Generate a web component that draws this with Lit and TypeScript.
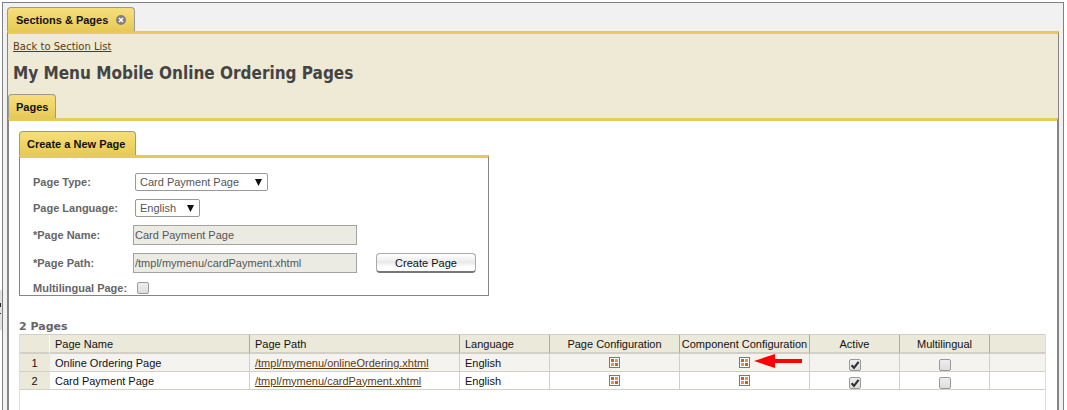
import { LitElement, html, css, svg } from "lit";
import { customElement, state } from "lit/decorators.js";

interface PageRow {
  name: string;
  path: string;
  language: string;
  active: boolean;
  multilingual: boolean;
  marked: boolean;
}

@customElement("app-root")
export class AppRoot extends LitElement {
  @state() private rows: PageRow[] = [
    { name: "Online Ordering Page", path: "/tmpl/mymenu/onlineOrdering.xhtml", language: "English", active: true, multilingual: false, marked: true },
    { name: "Card Payment Page", path: "/tmpl/mymenu/cardPayment.xhtml", language: "English", active: true, multilingual: false, marked: false },
  ];

  static styles = css`
    :host {
      display: flex;
      box-sizing: border-box;
      height: 100vh;
      overflow: hidden;
      padding: 2px 3px 0 2px;
      position: relative;
      background: #fff;
      font: 11px/16px "Liberation Sans", Arial, sans-serif;
      color: #111;
    }
    * { box-sizing: border-box; }
    .edge {
      position: absolute;
      left: 0;
      top: 290px;
      width: 2px;
      height: 40px;
      background: #e2e2e2;
    }
    .edge svg { display: block; }
    .frame {
      flex: 1;
      min-width: 0;
      display: flex;
      flex-direction: column;
      border: 1px solid #808080;
      border-bottom: 0;
      background: #f1f1f1;
      padding: 4px 4px 0;
    }
    .tab {
      display: flex;
      align-items: center;
      width: max-content;
      border: 1px solid #999;
      border-bottom: 0;
      border-radius: 4px 4px 0 0;
      background: linear-gradient(#f7de7c, #f0d566 50%, #e6ca58);
      padding: 0 7px;
      height: 24px;
      font-weight: bold;
      color: #111;
      margin: 0;
    }
    .tab.main { padding: 0 8px; gap: 8px; }
    .create .tab { padding-right: 10px; }
    .close {
      border: 0;
      padding: 0;
      background: none;
      width: 10px;
      height: 10px;
      display: block;
    }
    .close svg { display: block; }
    .body {
      flex: 1;
      display: flex;
      flex-direction: column;
      border: 1px solid #858585;
      border-top: 3px solid #e6ca58;
      border-bottom: 0;
      background: #eeead6;
    }
    .head { padding: 5px 5px 0; }
    .head a, td a { color: #5e3a10; text-decoration: underline; }
    .back { font: 10px/16px "DejaVu Sans", Verdana, sans-serif; display: block; width: max-content; }
    h1 {
      font: bold 17px/24px "DejaVu Sans Condensed", Tahoma, "Noto Sans", sans-serif;
      color: #444;
      margin: 6px 0 9px;
    }
    .content {
      flex: 1;
      border: 1px solid #858585;
      border-top: 3px solid #e6ca58;
      border-bottom: 0;
      background: #fff;
      padding: 10px 10px 0;
      display: flex;
      flex-direction: column;
    }
    .create { width: 470px; max-width: 100%; }
    .form {
      border: 1px solid #858585;
      border-top: 3px solid #e6ca58;
      padding: 15px 12px 0 13px;
      display: grid;
      grid-template-columns: 100px 224px 100px;
      column-gap: 0;
      row-gap: 8px;
      align-items: center;
    }
    .form label { font-weight: bold; line-height: 14px; color: #666; white-space: nowrap; }
    .form button { grid-column: 3; margin-left: 19px; }
    .form .first { grid-column: 1; }
    select, .text, .submit { font: 11px/16px "Liberation Sans", Arial, sans-serif; margin: 0; }
    select {
      appearance: none;
      justify-self: start;
      margin-left: 2px;
      height: 18px;
      border: 1px solid #999;
      border-radius: 2px;
      color: #555;
      padding: 0 4px;
      background: #fff url("data:image/svg+xml,%3Csvg xmlns='http://www.w3.org/2000/svg' width='7' height='7'%3E%3Cpath d='M0 0h7L3.5 7z' fill='%23111'/%3E%3C/svg%3E") no-repeat right 5px center;
    }
    .type { width: 133px; }
    .lang { width: 65px; }
    .text {
      height: 20px;
      width: 100%;
      border: 1px solid #a3a3a0;
      background: #ebebe4;
      color: #555;
      padding: 0 1px;
    }
    .submit {
      width: 100px;
      height: 20px;
      border: 1px solid #aaa;
      border-bottom: 2px solid #777;
      border-radius: 4px;
      background: linear-gradient(#fff, #e9e9e9 50%, #fff 75%);
      color: #111;
      padding: 0;
    }
    .tick {
      appearance: none;
      display: block;
      width: 12px;
      height: 12px;
      margin: 0 auto;
      border: 1px solid #999;
      border-radius: 2px;
      background: linear-gradient(#eee, #ddd);
    }
    .tick:checked {
      background: url("data:image/svg+xml,%3Csvg xmlns='http://www.w3.org/2000/svg' width='10' height='10'%3E%3Cpath d='M1.6 5.2L4 7.8L8.6 1.8' stroke='%23333' stroke-width='2.2' fill='none'/%3E%3C/svg%3E") center no-repeat, linear-gradient(#eee, #ddd);
    }
    .form .tick { margin: 0 4px; }
    h2 {
      font: bold 11px/12px "DejaVu Sans", Verdana, sans-serif;
      color: #666;
      margin: 25px 0 1px;
    }
    .grid {
      flex: 1;
      border: 1px solid #ddd;
      border-top-color: #d2cfc6;
      border-bottom: 0;
      margin-right: 1px;
    }
    table { width: 100%; table-layout: fixed; border-collapse: separate; border-spacing: 0; }
    th, td {
      height: 18px;
      padding: 0 4px 0 5px;
      text-align: left;
      font-weight: normal;
      white-space: nowrap;
      line-height: 16px;
      border-right: 1px solid #d2cfc6;
      border-bottom: 1px solid #d2cfc6;
    }
    thead th {
      background: #ebe9da;
      height: 19px;
      border-bottom-width: 2px;
      border-right-color: #aaa;
    }
    thead th:first-child { border-right-color: #fff; }
    tbody th { background: #ebe9da; text-align: center; border-right-color: #ebe9da; padding: 0; }
    th:last-child, td:last-child { border-right: 0; }
    tbody tr:nth-child(odd) td { background: #f5f3f0; }
    th.mid, td.mid { text-align: center; padding: 0; }
    td.low { vertical-align: bottom; }
    .c-num { width: 30px; }
    .c-name { width: 200px; }
    .c-path { width: 210px; }
    .c-small { width: 90px; }
    .c-conf { width: 130px; }
    .icon { position: relative; display: block; width: 11px; height: 11px; margin: 0 auto; }
    .icon > a, .icon svg { display: block; }
    .pointer { position: absolute; left: 15px; top: -3px; }
  `;

  private gridIcon() {
    return svg`<svg width="11" height="11" viewBox="0 0 11 11" shape-rendering="crispEdges">
      <rect x=".5" y=".5" width="10" height="10" fill="#fff" stroke="#c60"/>
      <path d="M2 2h3v3h-3zM6 6h3v3h-3z" fill="#c60"/>
      <path d="M6 2h3v3h-3zM2 6h3v3h-3z" fill="#dc9650"/>
    </svg>`;
  }

  private pointer() {
    return html`<svg class="pointer" width="48" height="14" viewBox="0 0 48 14">
      <path d="M0 7L21 0V5H48V9H21V14Z" fill="#f00"/>
    </svg>`;
  }

  render() {
    return html`
      <div class="edge">
        <svg width="2" height="40" viewBox="0 0 2 40"><path d="M0 13h1v4h-1zM0 23h1v1h-1z" fill="#222"/></svg>
      </div>
      <div class="frame">
        <div class="tab main">
          Sections &amp; Pages
          <button class="close" aria-label="Close">
            <svg width="10" height="10" viewBox="0 0 10 10"><circle cx="5" cy="5" r="5" fill="#808080"/><path d="M3 3l4 4M7 3l-4 4" stroke="#fff" stroke-width="1.6"/></svg>
          </button>
        </div>
        <div class="body">
          <div class="head">
            <a class="back" href="#">Back to Section List</a>
            <h1>My Menu Mobile Online Ordering Pages</h1>
          </div>
          <div class="tab">Pages</div>
          <div class="content">
            <div class="create">
              <div class="tab">Create a New Page</div>
              <form class="form">
                <label for="type">Page Type:</label>
                <select id="type" class="type"><option>Card Payment Page</option></select>
                <label class="first" for="lang">Page Language:</label>
                <select id="lang" class="lang"><option>English</option></select>
                <label class="first" for="name">*Page Name:</label>
                <input id="name" class="text" .value=${"Card Payment Page"} readonly />
                <label class="first" for="path">*Page Path:</label>
                <input id="path" class="text" .value=${"/tmpl/mymenu/cardPayment.xhtml"} readonly />
                <button class="submit" type="button">Create Page</button>
                <label class="first" for="multi">Multilingual Page:</label>
                <input id="multi" class="tick" type="checkbox" />
              </form>
            </div>
            <h2>2 Pages</h2>
            <div class="grid">
              <table>
                <colgroup>
                  <col class="c-num" /><col class="c-name" /><col class="c-path" /><col class="c-small" />
                  <col class="c-conf" /><col class="c-conf" /><col class="c-small" /><col class="c-small" /><col />
                </colgroup>
                <thead>
                  <tr>
                    <th></th><th>Page Name</th><th>Page Path</th><th>Language</th>
                    <th class="mid">Page Configuration</th><th class="mid">Component Configuration</th>
                    <th class="mid">Active</th><th class="mid">Multilingual</th><th></th>
                  </tr>
                </thead>
                <tbody>
                  ${this.rows.map((r, i) => html`<tr>
                    <th>${i + 1}</th>
                    <td>${r.name}</td>
                    <td><a href="#">${r.path}</a></td>
                    <td>${r.language}</td>
                    <td class="mid"><span class="icon"><a href="#" aria-label="Page configuration">${this.gridIcon()}</a></span></td>
                    <td class="mid"><span class="icon"><a href="#" aria-label="Component configuration">${this.gridIcon()}</a>${r.marked ? this.pointer() : null}</span></td>
                    <td class="mid low"><input class="tick" type="checkbox" aria-label="Active" .checked=${r.active} /></td>
                    <td class="mid low"><input class="tick" type="checkbox" aria-label="Multilingual" .checked=${r.multilingual} /></td>
                    <td></td>
                  </tr>`)}
                </tbody>
              </table>
            </div>
          </div>
        </div>
      </div>
    `;
  }
}
